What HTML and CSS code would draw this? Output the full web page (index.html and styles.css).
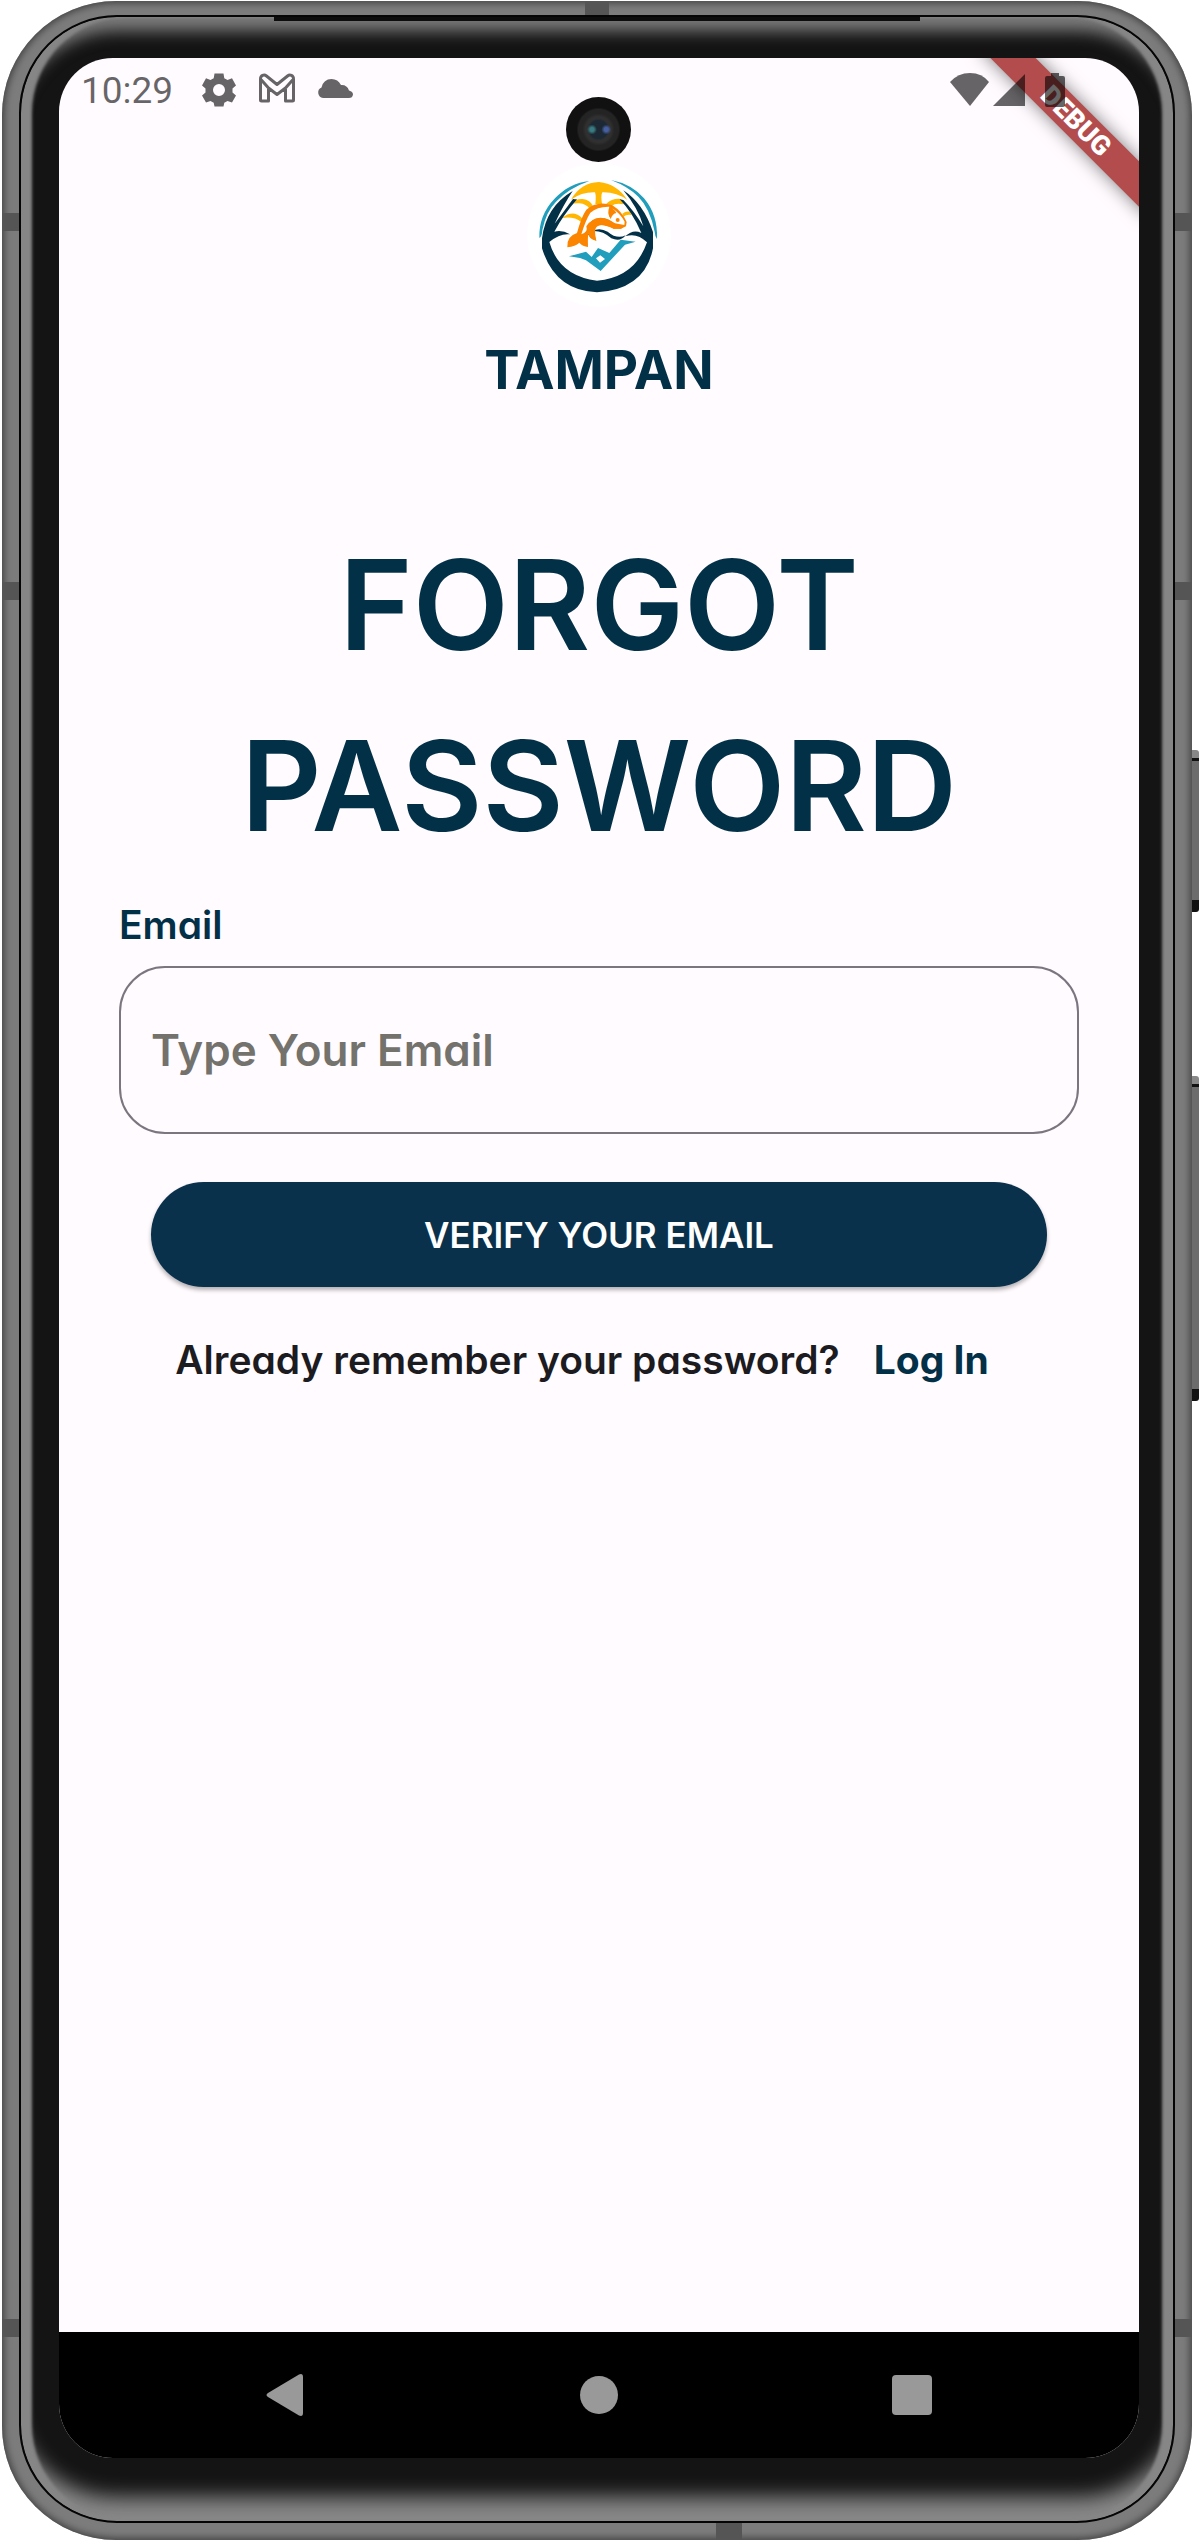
FILE: index.html
```html
<!DOCTYPE html>
<html lang="en">
<head>
<meta charset="utf-8">
<meta name="viewport" content="width=device-width, initial-scale=1">
<title>Tampan – Forgot Password</title>
<link rel="stylesheet" href="styles.css">
</head>
<body>
<div class="device">
  <span class="band band-left band-upper"></span>
  <span class="band band-left band-middle"></span>
  <span class="band band-left band-lower"></span>
  <span class="band band-right band-upper"></span>
  <span class="band band-right band-middle"></span>
  <span class="band band-right band-lower"></span>
  <span class="band band-top"></span>
  <span class="band band-bottom"></span>
  <span class="side-key power-key"></span>
  <span class="side-key volume-key"></span>
  <div class="bezel">
    <span class="earpiece"></span>
    <div class="screen">
      <div class="debug-banner"><span class="debug-text">DEBUG</span></div>
      <header class="status-bar">
        <div class="status-left">
          <span class="clock">10:29</span>
          <svg class="status-icon" width="36" height="36" viewBox="0 0 36 36" aria-hidden="true"><path fill-rule="evenodd" d="M13.500 1.500H22.500L23.300 6.200L26.500 8L31 6.300L35 13.500L31.500 16.500V20.500L35 23.500L31 30.500L26.500 29L23.300 30.800L22.500 34.500H13.500L12.700 30.800L9.500 29L5 30.500L1 23.500L4.500 20.500V16.500L1 13.500L5 6.300L9.500 8L12.700 6.200ZM18 12A6 6 0 1 0 18 24A6 6 0 1 0 18 12Z"/></svg>
          <svg class="status-icon" width="36" height="36" viewBox="0 0 36 36" aria-hidden="true"><path d="M1.500 28V7C1.500 3.500 5 2 7.500 4L18 12.500L28.500 4C31 2 34.500 3.500 34.500 7V28Q34.500 29 33.500 29H26.500V16L18 22.500L9.500 16V29H2.500Q1.500 29 1.500 28ZM1.500 7L9.500 16M34.500 7L26.500 16" fill="none" stroke="currentColor" stroke-width="3" stroke-linejoin="round"/></svg>
          <svg class="status-icon" width="36" height="36" viewBox="0 0 36 36" aria-hidden="true"><path d="M6 26A5.500 5.500 0 0 1 4.500 15.500Q6.500 7 14.500 7Q21 7 24 13Q30 12.500 32 18.500Q36 19.500 36 22.500Q35.500 26 32 26Z"/></svg>
        </div>
        <div class="status-right">
          <svg class="status-icon" width="40" height="34" viewBox="0 0 40 34" aria-hidden="true"><path d="M0 9Q8 0 20 0Q32 0 39 9L20 33Z"/></svg>
          <svg class="status-icon" width="33" height="34" viewBox="0 0 33 34" aria-hidden="true"><path d="M32 1V33H0Z"/></svg>
          <svg class="status-icon battery" width="20" height="34" viewBox="0 0 20 34" aria-hidden="true"><path d="M6 0H14V3H18Q20 3 20 5V32Q20 34 18 34H2Q0 34 0 32V5Q0 3 2 3H6Z"/></svg>
        </div>
      </header>
      <span class="camera"></span>
      <main class="content">
        <svg class="logo" viewBox="81 249 432 432" role="img" aria-label="Tampan logo">
          <circle cx="297" cy="465" r="216" fill="#fff"/>
          <g fill="#219ebc">
            <path d="M268 303Q210 308 165 355Q116 405 118 474Q126 470 127 450Q138 395 168 365Q205 325 268 303Z"/>
            <path d="M333 300Q395 312 432 355Q474 405 471 477Q465 470 464 455Q450 385 415 350Q385 320 333 300Z"/>
            <path d="M207 529L258 515L275 531L294 504L328 519L362 479L407 485L375 494L302 573L258 541L240 534ZM288 535L300 548L315 537L301 526Z" fill-rule="evenodd"/>
          </g>
          <g fill="#ffb703">
            <path d="M213 359Q242 308 297 306Q350 311 382 360Q350 336 307 337Q302 345 306 372H286Q289 350 285 337Q245 336 213 359Z"/>
            <path d="M204 374Q226 356 248 357Q271 360 279 378L269 386Q258 372 239 370Q219 369 204 374Z"/>
            <path d="M319 371Q337 354 363 357L371 373Q348 367 334 378Z"/>
            <path d="M187 414Q205 398 225 401Q242 406 248 418L244 426Q222 409 187 414Z"/>
            <path d="M367 401Q378 392 389 395L395 405Q380 402 370 410Z"/>
          </g>
          <g fill="#023047">
            <path d="M218 333Q190 375 164 431L219 357Q225 358 231 358Q190 405 163 455Q185 448 210 463Q180 459 148 486Q177 588 291 602Q405 592 441 487Q411 457 376 469Q399 447 424 459Q398 398 359 358L370 360Q400 390 430 439Q415 385 370 331Q430 370 459 456V505Q435 628 291 637Q165 632 126 505V475Q138 380 218 333Z"/>
            <path d="M277 453Q299 441 323 455Q351 479 377 466Q361 487 334 475Q308 451 277 453ZM249 466Q259 468 270 458Q260 475 249 466Z"/>
          </g>
          <g fill="#fb8500">
            <path d="M202 502Q199 469 231 459Q244 410 259 389Q292 361 337 376Q366 394 380 426L378 439L363 446H341Q310 432 295 436Q279 443 284 463Q286 475 289 482Q264 476 265 459Q263 472 264 501Q248 499 238 488Q226 499 202 502ZM244 463Q265 458 259 439Q273 414 314 415Q330 420 345 430L373 435L374 425Q360 399 338 386Q329 395 332 416Q320 402 328 380Q292 379 271 398Q257 420 244 463Z" fill-rule="evenodd"/>
            <path d="M263 440Q273 413 302 413Q325 413 344 431Q358 438 374 435L363 446H341Q306 428 290 440Q281 449 289 482Q270 479 265 459Z"/>
            <path d="M330 383Q344 387 349 399Q338 400 332 417Q322 401 330 383Z"/>
            <circle cx="353" cy="420" r="6"/>
          </g>
        </svg>
        <p class="brand">TAMPAN</p>
        <h1 class="title">FORGOT<br>PASSWORD</h1>
        <form class="form">
          <label class="label" for="email">Email</label>
          <input class="field" id="email" type="email" placeholder="Type Your Email">
          <button class="submit" type="button">VERIFY YOUR EMAIL</button>
        </form>
        <p class="footer"><span>Already remember your password?</span><a class="login" href="#login">Log In</a></p>
      </main>
      <nav class="nav-bar" aria-label="System navigation">
        <button class="nav-button" type="button" aria-label="Back"><svg width="44" height="44" viewBox="0 0 44 44"><path d="M4 20Q1 22 4 24L35 42.500Q39 44 39 40V4Q39 0 35 1.500Z"/></svg></button>
        <button class="nav-button" type="button" aria-label="Home"><svg width="44" height="44" viewBox="0 0 44 44"><circle cx="22" cy="22" r="19"/></svg></button>
        <button class="nav-button" type="button" aria-label="Recent apps"><svg width="44" height="44" viewBox="0 0 44 44"><rect x="2" y="2" width="40" height="40" rx="4"/></svg></button>
      </nav>
    </div>
  </div>
</div>
</body>
</html>
```
FILE: styles.css
```css
* {
  box-sizing: border-box;
}

body {
  margin: 0;
  padding: 1px 8px 1px 2px;
  min-height: 100vh;
  display: flex;
  flex-direction: column;
  background: #fff;
  color: #1c1b1f;
  font-family: Inter, "Open Sans", sans-serif;
  font-feature-settings: "cv11";
}

/* Phone shell */
.device {
  position: relative;
  flex: 1;
  display: flex;
  padding: 14px 17px 17px;
  border-radius: 114px;
  background: #7c7c7c;
  box-shadow: inset 0 0 7px 2px #414141;
}

.bezel {
  position: relative;
  flex: 1;
  display: flex;
  min-width: 0;
  padding: 41px 34px 63px 38px;
  border: 2px solid #050505;
  border-radius: 98px;
  background: #141414;
  box-shadow:
    inset 11px 0 3px #868686,
    inset -11px 0 3px #868686,
    inset 0 22px 16px -8px #7c7c7c,
    inset 0 -34px 20px -10px #888;
}

.earpiece {
  position: absolute;
  top: 0;
  left: 22%;
  right: 22%;
  height: 4px;
  background: #0c0c0c;
}

.band {
  position: absolute;
  width: 17px;
  height: 18px;
  background: #555;
}

.band-left { left: 0; }
.band-right { right: 0; }
.band-upper { top: 212px; }
.band-middle { top: 581px; }
.band-lower { bottom: 203px; }

.band-top {
  top: 0;
  left: 49%;
  width: 24px;
  height: 14px;
}

.band-bottom {
  bottom: 0;
  left: 60%;
  width: 26px;
  height: 17px;
}

.side-key {
  position: absolute;
  left: 100%;
  width: 7px;
  border-top: 8px solid #888;
  border-bottom: 12px solid #111;
  border-radius: 0 3px 3px 0;
  background: linear-gradient(#111 0 3px, #6c6c6c 3px);
}

.power-key {
  top: 749px;
  height: 162px;
}

.volume-key {
  top: 1075px;
  height: 325px;
}

/* Screen */
.screen {
  position: relative;
  flex: 1;
  display: flex;
  flex-direction: column;
  min-width: 0;
  overflow: hidden;
  border-radius: 54px;
  background: #fffbff;
}

.status-bar {
  position: relative;
  display: flex;
  justify-content: space-between;
  align-items: center;
  height: 64px;
  padding: 0 74px 0 22px;
  color: rgba(0, 0, 0, 0.6);
}

.status-left {
  display: flex;
  align-items: center;
  gap: 22px;
}

.status-right {
  display: flex;
  align-items: center;
  gap: 3px;
}

.clock {
  padding: 2px 6px 0 0;
  font-family: Roboto, sans-serif;
  font-size: 37px;
  line-height: 44px;
}

.status-icon {
  display: block;
  fill: currentColor;
}

.battery {
  margin-left: 16px;
}

.debug-banner {
  position: absolute;
  top: 47px;
  right: -57px;
  width: 240px;
  height: 32px;
  background: #b34d4d;
  box-shadow: 0 0 18px rgba(0, 0, 0, 0.5);
  color: #fff;
  font-family: Roboto, sans-serif;
  font-size: 27px;
  font-weight: 900;
  line-height: 32px;
  text-align: center;
  transform: rotate(45deg);
}

.camera {
  position: absolute;
  top: 39px;
  left: 50%;
  width: 65px;
  height: 65px;
  margin-left: -33px;
  border-radius: 50%;
  background:
    radial-gradient(circle at 40% 50%, #397b80 0 2px, transparent 5px),
    radial-gradient(circle at 62% 50%, #465fa0 0 2px, transparent 5px),
    radial-gradient(circle, #1c2833 0 9px, #303030 11px 13px, #242424 16px 20px, #111 22px);
}

.content {
  flex: 1;
  display: flex;
  flex-direction: column;
  align-items: center;
  padding: 41px 60px;
}

.logo {
  width: 144px;
  height: 144px;
}

.brand {
  margin: 33px 0 0;
  color: #023047;
  font-size: 53px;
  font-weight: 700;
  line-height: 60px;
}

.title {
  margin: 114px 0 0;
  color: #023047;
  font-size: 125px;
  font-weight: 600;
  line-height: 181px;
  text-align: center;
}

.form {
  align-self: stretch;
  display: flex;
  flex-direction: column;
  margin-top: 27px;
}

.label {
  color: #023047;
  font-size: 39px;
  font-weight: 600;
  line-height: 44px;
}

.field {
  width: 100%;
  height: 168px;
  margin-top: 19px;
  padding: 0 30px;
  border: 2px solid #7b757f;
  border-radius: 46px;
  background: transparent;
  color: #1c1b1f;
  font: inherit;
  font-size: 44px;
  font-weight: 600;
}

.field::placeholder {
  color: #74726c;
  opacity: 1;
}

.submit {
  height: 105px;
  margin: 48px 32px 0;
  border: 0;
  border-radius: 53px;
  background: #09314b;
  box-shadow: 0 3px 4px rgba(0, 0, 0, 0.3);
  color: #fff;
  font: inherit;
  font-size: 35px;
  font-weight: 600;
}

.footer {
  display: flex;
  justify-content: center;
  margin: 51px 0 0;
  font-size: 39px;
  font-weight: 600;
  line-height: 44px;
  white-space: nowrap;
}

.login {
  padding: 0 34px;
  color: #023047;
  font-weight: 700;
  text-decoration: none;
}

.nav-bar {
  display: flex;
  justify-content: space-around;
  align-items: center;
  height: 126px;
  padding: 0 71px;
  background: #000;
}

.nav-button {
  display: flex;
  padding: 0;
  border: 0;
  background: none;
  fill: #999;
}
```
